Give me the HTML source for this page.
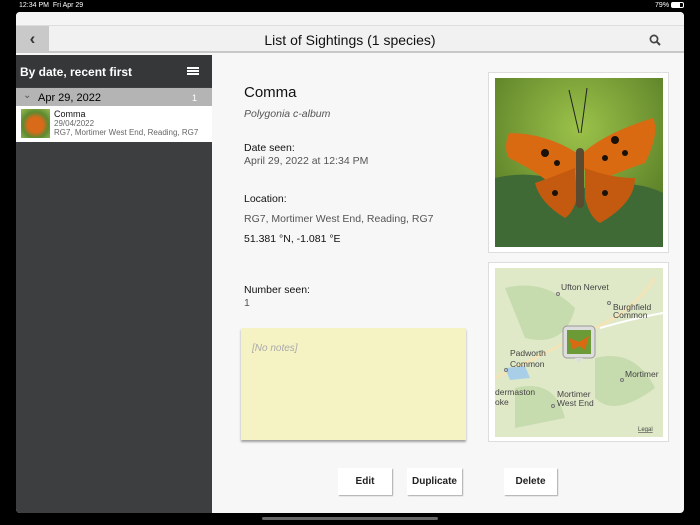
<!DOCTYPE html>
<html><head><meta charset="utf-8"><style>
*{margin:0;padding:0;box-sizing:border-box}
body{width:700px;height:525px;background:#000;position:relative;overflow:hidden;font-family:"Liberation Sans",sans-serif}
.abs{position:absolute}
</style></head><body>
<div class="abs" style="left:19px;top:2px;color:#fff;font-size:7px">12:34 PM&nbsp;&nbsp;Fri Apr 29</div>
<div class="abs" style="right:16px;top:2px;color:#fff;font-size:7px">79% <span style="display:inline-block;width:13px;height:6px;border:1px solid #fff;border-radius:2px;vertical-align:-1px;background:linear-gradient(90deg,#fff 75%,transparent 75%)"></span></div>
<div class="abs" style="left:16px;top:12px;width:668px;height:501px;background:#f7f7f7;border-radius:4px;overflow:hidden">
 <div class="abs" style="left:0;top:0;width:668px;height:13px;background:#f4f4f4"></div>
 <div class="abs" style="left:0;top:13px;width:668px;height:28px;background:#f1f1f1;border-top:1px solid #ddd;border-bottom:2px solid #c8c8c8"></div>
 <div class="abs" style="left:0;top:14px;width:33px;height:25px;background:#c9c9c9;color:#333;font-size:17px;font-weight:bold;text-align:center;line-height:25px">&#8249;</div>
 <div class="abs" style="left:0;top:20px;width:668px;text-align:center;font-size:14px;color:#111">List of Sightings (1 species)</div>
 <svg class="abs" style="left:633px;top:22px" width="12" height="12" viewBox="0 0 12 12"><circle cx="5" cy="5" r="3.6" fill="none" stroke="#444" stroke-width="1.7"/><path d="M7.6 7.6L11 11" stroke="#444" stroke-width="2"/></svg>
 <div class="abs" style="left:0;top:43px;width:196px;height:458px;background:#3c3e40"></div>
 <div class="abs" style="left:0;top:43px;width:196px;height:32px;background:#353739"></div>
 <div class="abs" style="left:4px;top:53px;color:#fff;font-size:12px;font-weight:bold">By date, recent first</div>
 <div class="abs" style="left:171px;top:55px;width:12px;height:2px;background:#fff;box-shadow:0 3px 0 #fff,0 6px 0 #fff"></div>
 <div class="abs" style="left:0;top:76px;width:196px;height:18px;background:#b4b4b4"></div>
 <div class="abs" style="left:7px;top:78px;font-size:10px;color:#555">&#8964;</div>
 <div class="abs" style="left:22px;top:80px;font-size:11px;color:#000">Apr 29, 2022</div>
 <div class="abs" style="left:176px;top:81px;font-size:9px;color:#fff">1</div>
 <div class="abs" style="left:0;top:94px;width:196px;height:36px;background:#fff"></div>
 <div class="abs" style="left:5px;top:97px;width:29px;height:29px;background:radial-gradient(circle at 50% 55%,#d86a1a 0 35%,#5c8a30 60%,#9bbd55 100%)"></div>
 <div class="abs" style="left:38px;top:97px;font-size:9px;color:#111">Comma</div>
 <div class="abs" style="left:38px;top:107px;font-size:8px;color:#666">29/04/2022</div>
 <div class="abs" style="left:38px;top:116px;font-size:8px;color:#666">RG7, Mortimer West End, Reading, RG7</div>
 <div class="abs" style="left:228px;top:72px;font-size:15px;color:#111">Comma</div>
 <div class="abs" style="left:228px;top:96px;font-size:10.5px;color:#555;font-style:italic">Polygonia c-album</div>
 <div class="abs" style="left:228px;top:130px;font-size:10.5px;color:#111">Date seen:</div>
 <div class="abs" style="left:228px;top:143px;font-size:10.5px;color:#555">April 29, 2022 at 12:34 PM</div>
 <div class="abs" style="left:228px;top:181px;font-size:10.5px;color:#111">Location:</div>
 <div class="abs" style="left:228px;top:201px;font-size:10.5px;color:#555">RG7, Mortimer West End, Reading, RG7</div>
 <div class="abs" style="left:228px;top:221px;font-size:10.5px;color:#111">51.381 °N, -1.081 °E</div>
 <div class="abs" style="left:228px;top:272px;font-size:10.5px;color:#111">Number seen:</div>
 <div class="abs" style="left:228px;top:285px;font-size:10.5px;color:#555">1</div>
 <div class="abs" style="left:225px;top:316px;width:225px;height:112px;background:#f5f2c4;box-shadow:0 2px 2px rgba(0,0,0,.35)"></div>
 <div class="abs" style="left:236px;top:331px;font-size:10px;color:#aaa;font-style:italic">[No notes]</div>
 <div class="abs" style="left:472px;top:60px;width:181px;height:181px;background:#fff;border:1px solid #ddd"></div>
 <svg class="abs" style="left:479px;top:66px" width="168" height="169" viewBox="0 0 168 169">
  <defs><radialGradient id="bg" cx="50%" cy="30%" r="70%"><stop offset="0" stop-color="#9cc24a"/><stop offset="1" stop-color="#557a25"/></radialGradient></defs>
  <rect width="168" height="169" fill="url(#bg)"/>
  <path d="M0 100 Q40 90 90 110 Q140 100 168 115 L168 169 L0 169Z" fill="#3f6a35"/>
  <path d="M84 55 L74 12 M86 55 L92 10" stroke="#222" stroke-width="1"/>
  <path d="M82 75 Q50 55 14 55 Q8 70 14 80 Q45 95 60 110 Q70 110 82 90Z" fill="#d96a12"/>
  <path d="M88 75 Q110 55 158 40 Q165 55 150 85 Q120 95 100 105 Q92 95 88 90Z" fill="#d96a12"/>
  <path d="M80 90 Q55 100 40 105 Q45 125 70 140 Q78 135 82 120Z" fill="#c45a10"/>
  <path d="M90 90 Q115 100 140 100 Q140 125 105 145 Q95 140 90 120Z" fill="#c45a10"/>
  <rect x="81" y="70" width="8" height="60" rx="4" fill="#5a4a30"/>
  <g fill="#1a1208"><circle cx="50" cy="75" r="4"/><circle cx="62" cy="85" r="3"/><circle cx="120" cy="62" r="4"/><circle cx="110" cy="80" r="3"/><circle cx="130" cy="75" r="3"/><circle cx="60" cy="115" r="3"/><circle cx="110" cy="115" r="3"/></g>
 </svg>
 <div class="abs" style="left:472px;top:250px;width:181px;height:180px;background:#fff;border:1px solid #ddd"></div>
 <svg class="abs" style="left:479px;top:256px" width="168" height="169" viewBox="0 0 168 169" font-family="Liberation Sans" font-size="8.5" fill="#444">
  <rect width="168" height="169" fill="#dfe9c8"/>
  <path d="M10 20 Q50 10 80 40 Q70 80 30 70Z M100 90 Q140 80 160 120 Q120 150 100 130Z M20 120 Q60 110 70 150 L20 160Z" fill="#c7dcae"/>
  <path d="M0 110 Q60 80 110 55 Q140 40 160 10" stroke="#f3e4b8" stroke-width="3" fill="none"/>
  <path d="M105 60 Q140 50 168 45" stroke="#fff" stroke-width="2" fill="none"/>
  <path d="M10 100 L30 98 L35 110 L15 112Z" fill="#a9cfe8"/>
  <text x="66" y="22">Ufton Nervet</text><text x="118" y="42">Burghfield</text><text x="118" y="50">Common</text>
  <text x="15" y="88">Padworth</text><text x="15" y="99">Common</text><text x="130" y="109">Mortimer</text>
  <text x="0" y="127">dermaston</text><text x="0" y="137">oke</text><text x="62" y="129">Mortimer</text><text x="62" y="138">West End</text>
  <text x="143" y="163" font-size="6" text-decoration="underline">Legal</text>
  <g fill="none" stroke="#777"><circle cx="63" cy="26" r="1.5"/><circle cx="114" cy="35" r="1.5"/><circle cx="11" cy="102" r="1.5"/><circle cx="127" cy="112" r="1.5"/><circle cx="58" cy="138" r="1.5"/></g>
  <rect x="68" y="58" width="32" height="32" rx="4" fill="#ddd" stroke="#999"/><path d="M80 90 L84 95 L88 90Z" fill="#ddd"/>
  <rect x="72" y="62" width="24" height="24" fill="#6b9a36"/><path d="M74 70 L84 74 L94 68 L90 82 L84 78 L78 82Z" fill="#d96a12"/>
 </svg>
 <div class="abs" style="left:322px;top:456px;width:54px;height:27px;background:#fff;box-shadow:1px 1px 1px #aaa;font-size:10px;font-weight:bold;text-align:center;line-height:27px;color:#222">Edit</div>
 <div class="abs" style="left:391px;top:456px;width:55px;height:27px;background:#fff;box-shadow:1px 1px 1px #aaa;font-size:10px;font-weight:bold;text-align:center;line-height:27px;color:#222">Duplicate</div>
 <div class="abs" style="left:488px;top:456px;width:53px;height:27px;background:#fff;box-shadow:1px 1px 1px #aaa;font-size:10px;font-weight:bold;text-align:center;line-height:27px;color:#222">Delete</div>
</div>
<div class="abs" style="left:262px;top:517px;width:176px;height:3px;border-radius:2px;background:#666"></div>
</body></html>
